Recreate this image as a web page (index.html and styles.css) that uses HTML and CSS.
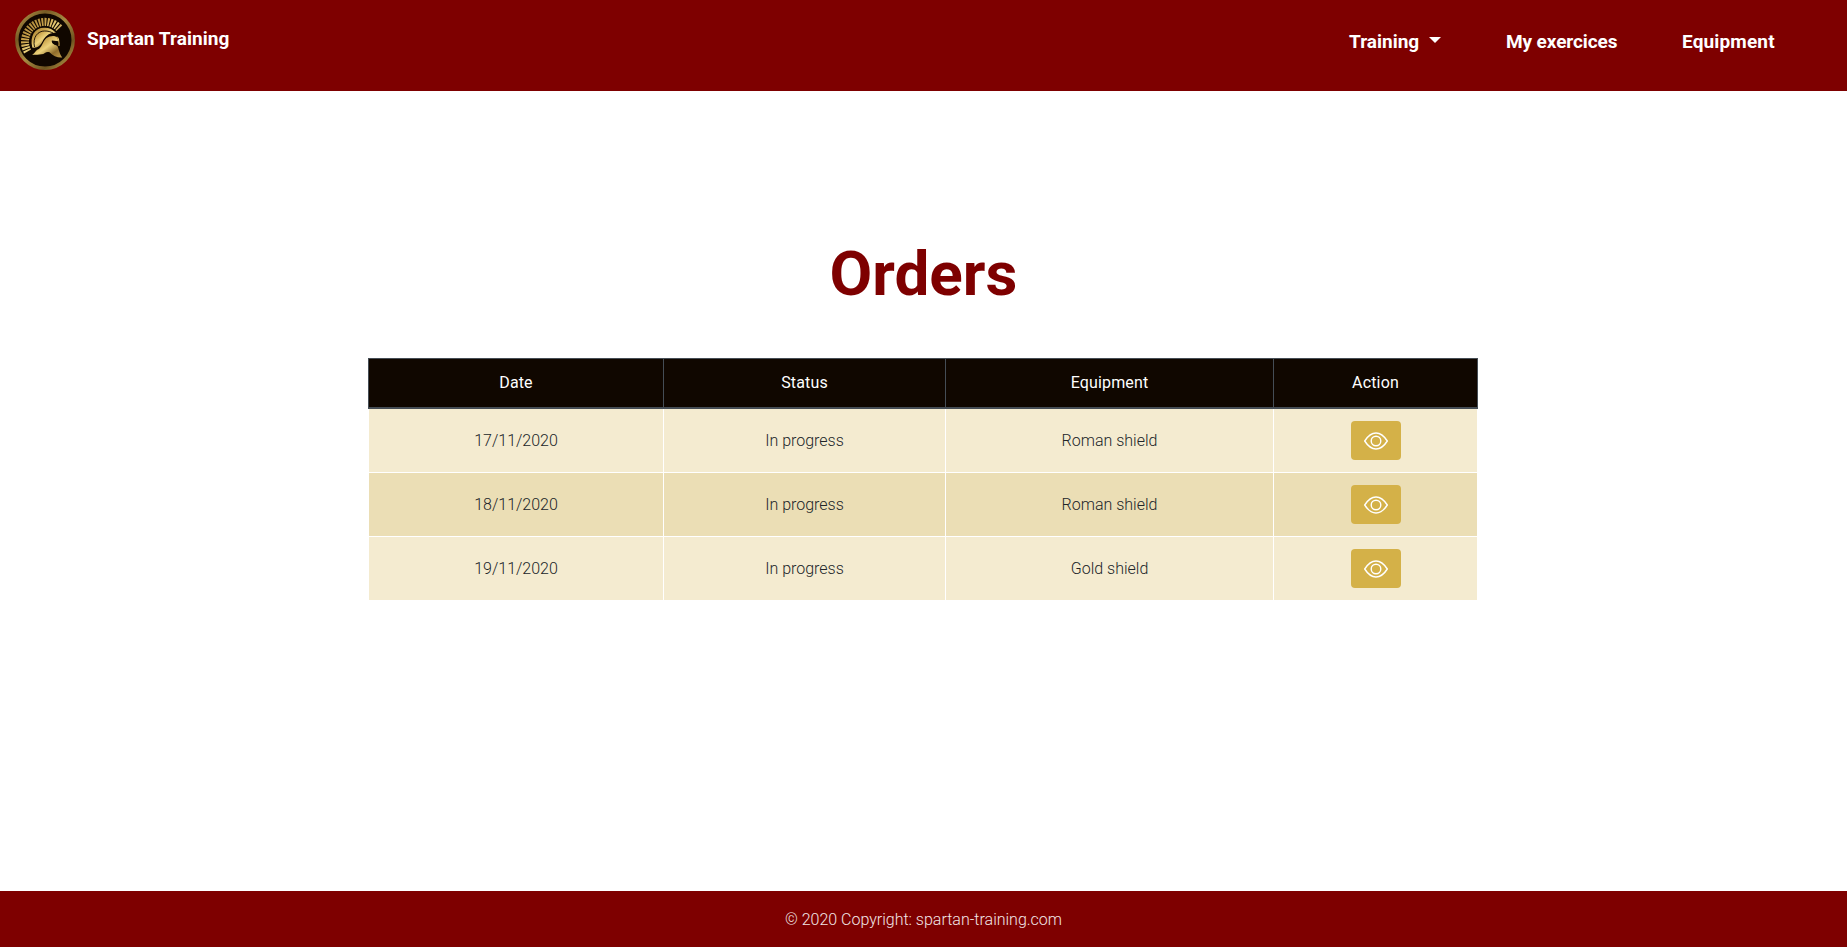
FILE: index.html
```
<!DOCTYPE html>
<html lang="en">
<head>
<meta charset="utf-8">
<title>Spartan Training</title>
<link rel="stylesheet" href="styles.css">
</head>
<body>
<header class="navbar">
  <a class="brand">
    <svg class="logo" viewBox="0 0 60 60">
      <defs>
        <linearGradient id="gold" x1="0" y1="0" x2="1" y2="1">
          <stop offset="0" stop-color="#a07c32"/><stop offset=".3" stop-color="#c9a24a"/><stop offset=".5" stop-color="#ecd27c"/><stop offset=".75" stop-color="#8f6c2b"/><stop offset="1" stop-color="#c5a04c"/>
        </linearGradient>
        <linearGradient id="ring" x1="0" y1="0" x2="1" y2="1">
          <stop offset="0" stop-color="#c2a251"/><stop offset=".25" stop-color="#765a24"/><stop offset=".5" stop-color="#a78a42"/><stop offset=".75" stop-color="#6f5420"/><stop offset="1" stop-color="#c7a650"/>
        </linearGradient>
      </defs>
      <circle cx="30" cy="30" r="28.2" fill="#100700" stroke="url(#ring)" stroke-width="3.4"/>
      <path class="crest" pathLength="78.5" d="M12.600 41.500A19.800 19.800 0 0 1 44.300 18.200"/>
      <path fill="url(#gold)" d="M17.300 37.500C14.500 26 20 17.800 29 17.800C34 17.600 38 19.500 41 22.800C33.500 22.500 30 27 27.500 31.500C25.500 35.500 22 38.500 17.300 37.500Z"/>
      <path fill="none" stroke="#100700" stroke-width=".9" d="M19.500 37C17.300 27 23 21 29.500 21C33 20.900 35.500 21.800 38 23"/>
      <path fill="url(#gold)" d="M17.200 45C20.500 42.500 20 40.600 24 39C27.500 36 28 31 31.500 28C35 25.500 40 25.200 42.500 27.500L43.500 31.200L37 30.500C36.500 33 38 34 42 35.500C44 38.300 43.500 42 47.200 47.500C43 48 38 46 34.500 42.300C31 40.800 30 44 26.500 44.300C23 45.200 20 44.300 17.200 45Z"/>
      <path fill="#100700" d="M36.500 30.700Q40.500 31 43.600 35.500Q38 35.500 36.500 30.700Z"/>
      <path fill="none" stroke="url(#gold)" stroke-width="1.300" d="M42 27Q44.500 29.500 43.900 36"/>
    </svg>
    <span class="brand-name">Spartan Training</span>
  </a>
  <nav class="menu">
    <a class="menu-link training">Training</a><i class="caret"></i>
    <a class="menu-link exercises">My exercices</a>
    <a class="menu-link equipment">Equipment</a>
  </nav>
</header>
<main class="content">
  <h1 class="title">Orders</h1>
  <table class="orders">
    <colgroup><col class="col-date"><col class="col-status"><col class="col-equipment"><col class="col-action"></colgroup>
    <thead><tr><th>Date</th><th>Status</th><th>Equipment</th><th>Action</th></tr></thead>
    <tbody>
      <tr><td>17/11/2020</td><td>In progress</td><td>Roman shield</td><td><a class="view"><svg class="eye" viewBox="0 0 24 18"><path d="M.7 9Q5.800 1 12 1T23.300 9Q18.200 17 12 17T.7 9Z"/><circle cx="12" cy="9" r="4.800"/></svg></a></td></tr>
      <tr><td>18/11/2020</td><td>In progress</td><td>Roman shield</td><td><a class="view"><svg class="eye" viewBox="0 0 24 18"><path d="M.7 9Q5.800 1 12 1T23.300 9Q18.200 17 12 17T.7 9Z"/><circle cx="12" cy="9" r="4.800"/></svg></a></td></tr>
      <tr><td>19/11/2020</td><td>In progress</td><td>Gold shield</td><td><a class="view"><svg class="eye" viewBox="0 0 24 18"><path d="M.7 9Q5.800 1 12 1T23.300 9Q18.200 17 12 17T.7 9Z"/><circle cx="12" cy="9" r="4.800"/></svg></a></td></tr>
    </tbody>
  </table>
</main>
<footer class="footer">© 2020 Copyright: spartan-training.com</footer>
</body>
</html>
```
FILE: styles.css
```
* { box-sizing: border-box; }
body {
  margin: 0;
  height: 947px;
  display: flex;
  flex-direction: column;
  font: 300 16px/24px Roboto, sans-serif;
  color: #212529;
  background: #fff;
}
.navbar {
  height: 91px;
  flex: none;
  display: flex;
  justify-content: space-between;
  align-items: flex-start;
  padding: 10px 72px 0 15px;
  background: #7e0000;
  color: #fff;
  font: 700 19px/30px Roboto, sans-serif;
}
.brand { display: flex; }
.logo { width: 60px; height: 60px; margin-right: 12px; }
.crest {
  fill: none;
  stroke: url(#gold);
  stroke-width: 8;
  stroke-dasharray: 2.5 1.5;
}
.brand-name { margin-top: 14px; white-space: nowrap; letter-spacing: .05px; }
.menu { display: flex; padding-top: 17px; white-space: nowrap; }
.menu-link { flex: none; }
.training { width: 80px; }
.caret {
  width: 0;
  height: 0;
  margin: 10px 65px 0 0;
  border: 6px solid transparent;
  border-top: 6px solid #fff;
  border-bottom: 0;
}
.exercises { width: 176px; letter-spacing: -.1px; }
.equipment { width: 93px; letter-spacing: .15px; }
.content { flex: 1; display: flex; flex-direction: column; align-items: center; }
.title {
  margin: 145px 0 0;
  height: 122px;
  color: #7e0000;
  font: 700 62px/76px Roboto, sans-serif;
}
.orders {
  width: 1110px;
  margin-right: 1px;
  table-layout: fixed;
  border-collapse: collapse;
  text-align: center;
}
.col-date { width: 295px; }
.col-status { width: 282px; }
.col-equipment { width: 328px; }
.orders th {
  height: 49px;
  padding: 0;
  font-weight: 400;
  letter-spacing: .15px;
  color: #fff;
  background: #100700;
  border: 1px solid #454d55;
  border-bottom-width: 2px;
}
.orders td {
  height: 64px;
  padding: 0;
  background: #f4ebd0;
  border: 1px solid #fff;
}
.orders tr:first-child td { height: 65px; padding-top: 1px; }
.orders tr:nth-child(2) td { background: #ebdeb5; }
.view {
  display: flex;
  align-items: center;
  justify-content: center;
  width: 50px;
  height: 39px;
  margin: 0 auto;
  border-radius: 4px;
  background: #d4b148;
}
.eye { width: 24px; height: 18px; fill: none; stroke: #fff; stroke-width: 1.400; }
.footer {
  height: 56px;
  flex: none;
  background: #7e0000;
  color: #f2e6e6;
  text-align: center;
  line-height: 58px;
}
```
